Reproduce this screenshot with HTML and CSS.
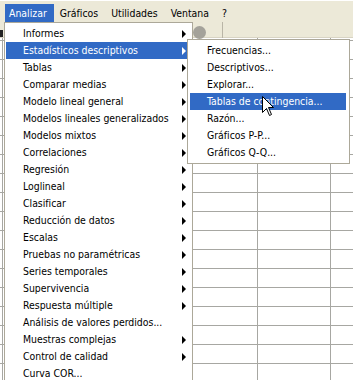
FILE: index.html
```html
<!DOCTYPE html>
<html lang="es">
<head>
    <meta charset="UTF-8">
    <title>Analizar</title>
    <link rel="stylesheet" href="styles.css">
</head>
<body>
    <div class="menubar">
        <span class="menubar-item active">Analizar</span>
        <span class="menubar-item">Gráficos</span>
        <span class="menubar-item">Utilidades</span>
        <span class="menubar-item">Ventana</span>
        <span class="menubar-item">?</span>
    </div>

    <div class="workspace">
        <div class="toolbar">
            <span class="tool-dark"></span>
            <span class="tool-sep"></span>
            <span class="tool-circle"></span>
        </div>
        <div class="grid">
            <div class="col col-a"></div>
            <div class="col col-b"></div>
            <div class="col col-c"></div>
            <div class="col col-d"></div>
        </div>

        <!-- menu Analizar -->
        <ul class="menu main-menu">
            <li class="sub">Informes</li>
            <li class="sub selected">Estadísticos descriptivos</li>
            <li class="sub">Tablas</li>
            <li class="sub">Comparar medias</li>
            <li class="sub">Modelo lineal general</li>
            <li class="sub">Modelos lineales generalizados</li>
            <li class="sub">Modelos mixtos</li>
            <li class="sub">Correlaciones</li>
            <li class="sub">Regresión</li>
            <li class="sub">Loglineal</li>
            <li class="sub">Clasificar</li>
            <li class="sub">Reducción de datos</li>
            <li class="sub">Escalas</li>
            <li class="sub">Pruebas no paramétricas</li>
            <li class="sub">Series temporales</li>
            <li class="sub">Supervivencia</li>
            <li class="sub">Respuesta múltiple</li>
            <li>Análisis de valores perdidos...</li>
            <li class="sub">Muestras complejas</li>
            <li class="sub">Control de calidad</li>
            <li>Curva COR...</li>
        </ul>

        <!-- submenu Estadísticos descriptivos -->
        <ul class="menu sub-menu">
            <li>Frecuencias...</li>
            <li>Descriptivos...</li>
            <li>Explorar...</li>
            <li class="selected">Tablas de contingencia...</li>
            <li>Razón...</li>
            <li>Gráficos P-P...</li>
            <li>Gráficos Q-Q...</li>
        </ul>

        <svg class="cursor" width="13" height="21" viewBox="0 0 13 21">
            <path d="M0.5 0.5 L0.5 16.5 L4.5 12.5 L7.5 19.5 L9.5 18.5 L6.5 11.5 L11.5 11.5 Z" fill="#fff" stroke="#000" stroke-width="1"/>
        </svg>
    </div>
</body>
</html>
```

FILE: styles.css
```css
:root {
    --xp-face: #ECE9D8;
    --xp-select: #316AC5;
    --xp-border: #ACA899;
    --grid-line: #A7A7A2;
    --row: 17px;
}

* {
    box-sizing: border-box;
    margin: 0;
    padding: 0;
}

body {
    width: 353px;
    height: 380px;
    overflow: hidden;
    background: #fff;
    font-family: "DejaVu Sans Condensed", "Liberation Sans", sans-serif;
    font-size: 10.4px;
    color: #000;
}

/* barra de menus */
.menubar {
    height: 22px;
    padding: 3px 0 1px 5px;
    background: var(--xp-face);
    border-top: 1px solid #fff;
    display: flex;
}

.menubar-item {
    height: 18px;
    line-height: 18px;
    padding: 0 7px 0 6px;
}

.menubar-item:first-child {
    padding-left: 4px;
}

.menubar-item.active {
    background: var(--xp-select);
    color: #fff;
}

/* area de datos */
.workspace {
    position: relative;
    height: 358px;
}

.toolbar {
    height: 16px;
    background: var(--xp-face);
    border-bottom: 1px solid #d8d4c4;
    display: flex;
    align-items: center;
}

.tool-dark {
    width: 3px;
    height: 7px;
    margin-top: 8px;
    background: #222;
}

.tool-sep {
    width: 1px;
    height: 16px;
    margin-left: 219px;
    background: #b9b5a6;
}

.tool-circle {
    width: 13px;
    height: 13px;
    margin-left: -30px;
    margin-top: 6px;
    border-radius: 50%;
    background: #a4a29a;
}

.grid {
    height: 342px;
    display: flex;
    background: repeating-linear-gradient(to bottom,
        transparent 0, transparent 1px,
        var(--grid-line) 1px, var(--grid-line) 2px,
        transparent 2px, transparent 19px);
    background-size: 100% 19px;
    background-position: 0 1px;
}

.col {
    border-right: 1px solid var(--grid-line);
}

.col-a { width: 3px; }
.col-b { width: 190px; }
.col-c { width: 65px; }
.col-d { width: 73px; }

/* menus */
.menu {
    position: absolute;
    list-style: none;
    background: #fff;
    border: 1px solid var(--xp-border);
    padding: 2px 4px 2px 1px;
}

.menu li {
    position: relative;
    height: var(--row);
    line-height: var(--row);
    padding-left: 17px;
    white-space: nowrap;
}

.menu li.selected {
    background: var(--xp-select);
    color: #fff;
}

.menu li.sub::after {
    content: "";
    position: absolute;
    right: 2px;
    top: 5px;
    border-left: 4px solid #000;
    border-top: 4px solid transparent;
    border-bottom: 4px solid transparent;
}

.menu li.sub.selected::after {
    border-left-color: #fff;
}

.main-menu {
    left: 4px;
    top: 0;
    width: 189px;
    height: 370px;
    padding-top: 2px;
}

.sub-menu {
    left: 187px;
    top: 17px;
    width: 163px;
    padding: 2px 3px 2px 2px;
}

.cursor {
    position: absolute;
    left: 262px;
    top: 74px;
}
```
